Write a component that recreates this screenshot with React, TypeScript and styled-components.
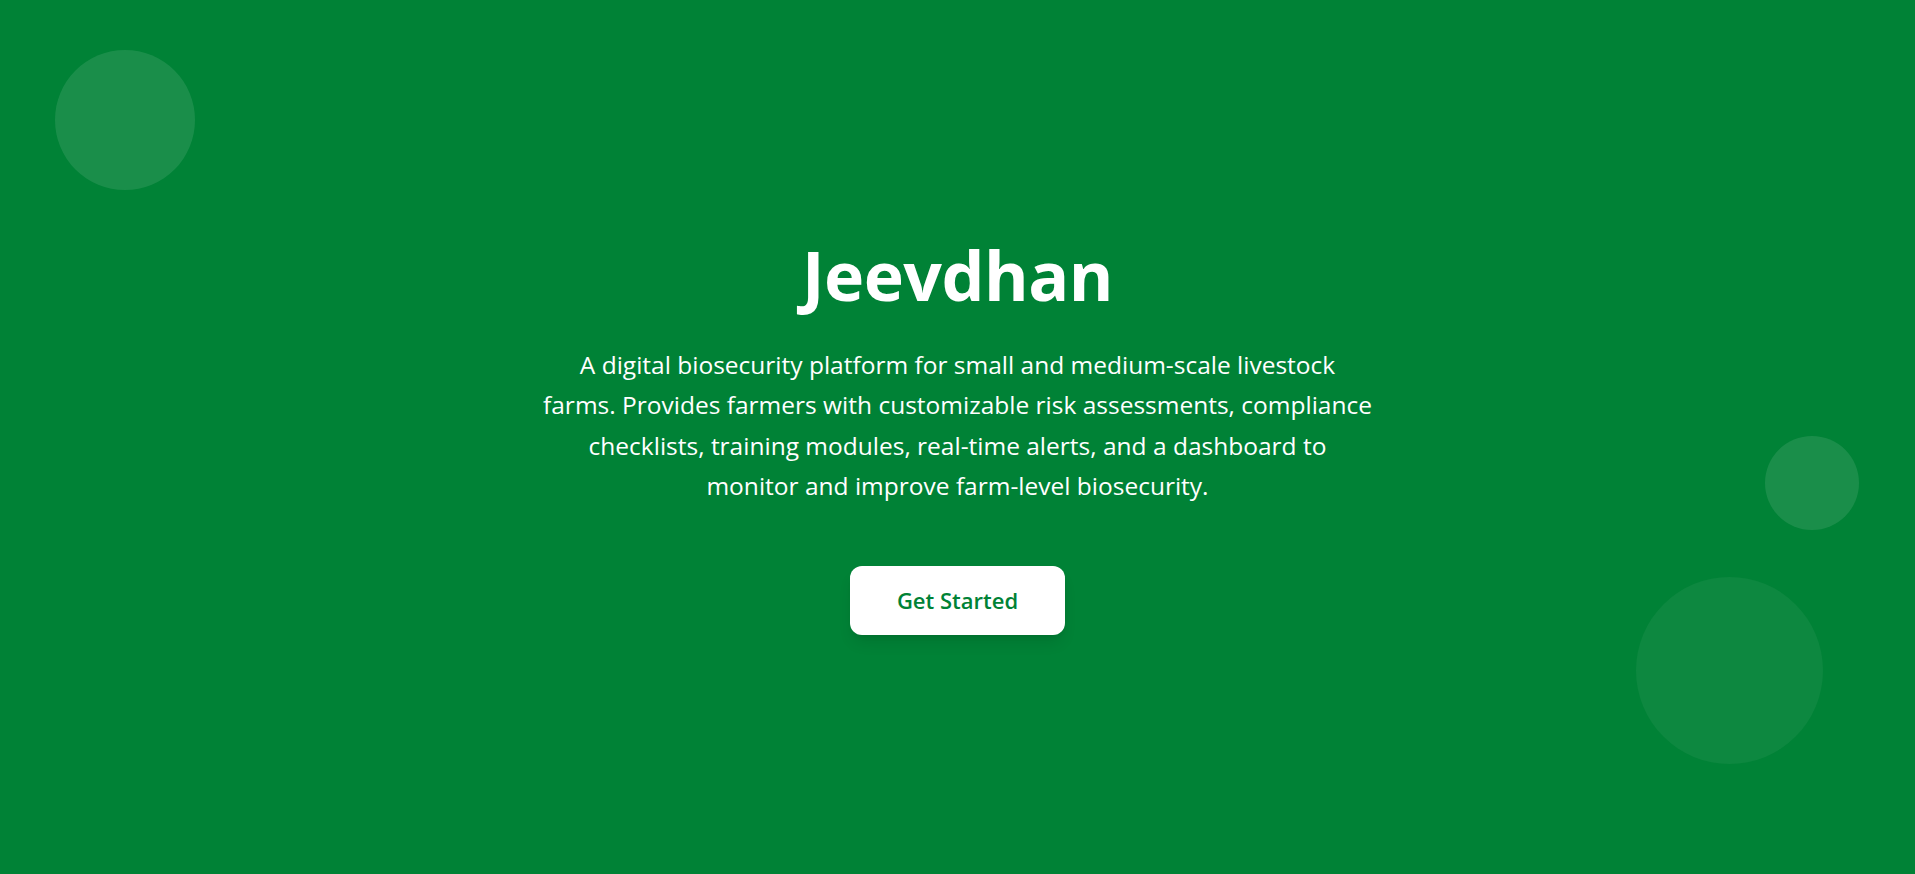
import React from "react";
import styled, { createGlobalStyle } from "styled-components";

const GlobalStyle = createGlobalStyle`
  html, body {
    margin: 0;
    padding: 0;
    height: 100%;
    background: #008236;
  }
  #root {
    min-height: 100vh;
  }
  * {
    box-sizing: border-box;
  }
`;

const Hero = styled.section`
  position: relative;
  overflow: hidden;
  min-height: 100vh;
  background: #008236;
  display: flex;
  align-items: center;
  justify-content: center;
  font-family: "Open Sans", "Noto Sans", sans-serif;
  color: #ffffff;
`;

const Bubble = styled.div<{ $size: number; $alpha: number }>`
  position: absolute;
  width: ${(p) => p.$size}px;
  height: ${(p) => p.$size}px;
  border-radius: 50%;
  background: rgba(255, 255, 255, ${(p) => p.$alpha});
`;

const BubbleTopLeft = styled(Bubble)`
  top: 50px;
  left: 55px;
`;

const BubbleRight = styled(Bubble)`
  top: 436px;
  right: 56px;
`;

const BubbleBottomRight = styled(Bubble)`
  bottom: 110px;
  right: 92px;
`;

const Content = styled.div`
  position: relative;
  z-index: 1;
  display: flex;
  flex-direction: column;
  align-items: center;
  text-align: center;
  padding: 0 24px;
  margin-top: 1px;
`;

const Title = styled.h1`
  margin: 0 0 36px;
  font-size: 68px;
  line-height: 1;
  font-weight: 700;
  letter-spacing: -0.5px;
`;

const Description = styled.p`
  margin: 0 0 59px;
  max-width: 900px;
  font-size: 24.5px;
  line-height: 40.5px;
  font-weight: 400;
`;

const CTA = styled.button`
  border: none;
  cursor: pointer;
  background: #ffffff;
  color: #008236;
  font-family: inherit;
  font-size: 22px;
  font-weight: 600;
  line-height: 29px;
  padding: 20px 0;
  width: 215px;
  border-radius: 12px;
  box-shadow: 0 10px 15px -3px rgba(0, 0, 0, 0.1),
    0 4px 6px -4px rgba(0, 0, 0, 0.1);
`;

export default function App() {
  return (
    <>
      <GlobalStyle />
      <Hero>
        <BubbleTopLeft $size={140} $alpha={0.1} />
        <BubbleRight $size={94} $alpha={0.1} />
        <BubbleBottomRight $size={187} $alpha={0.05} />
        <Content>
          <Title>Jeevdhan</Title>
          <Description>
            A digital biosecurity platform for small and medium-scale livestock
            <br />
            farms. Provides farmers with customizable risk assessments, compliance
            <br />
            checklists, training modules, real-time alerts, and a dashboard to
            <br />
            monitor and improve farm-level biosecurity.
          </Description>
          <CTA>Get Started</CTA>
        </Content>
      </Hero>
    </>
  );
}
